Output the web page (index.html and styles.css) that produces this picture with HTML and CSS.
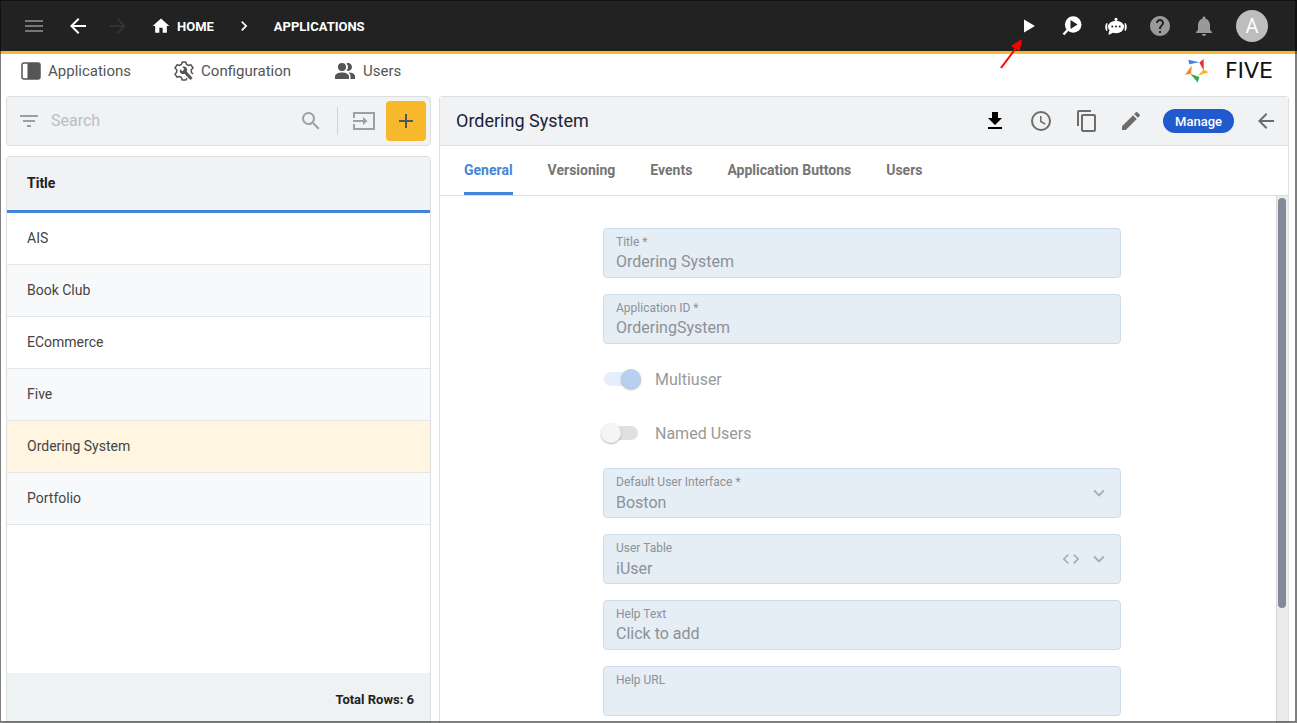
FILE: index.html
```html
<!DOCTYPE html>
<html lang="en">
<head>
<meta charset="utf-8">
<title>Five - Applications</title>
<link rel="stylesheet" href="styles.css">
</head>
<body>
<div class="app">
  <header class="topbar">
    <button class="icon-btn menu" aria-label="Menu"><svg width="24" height="24" viewBox="0 0 24 24"><path fill="currentColor" d="M3 6h18v2H3zm0 5h18v2H3zm0 5h18v2H3z"/></svg></button>
    <button class="icon-btn" aria-label="Back"><svg width="24" height="24" viewBox="0 0 24 24"><path fill="currentColor" d="M20 11H7.830l5.590-5.590L12 4l-8 8 8 8 1.410-1.410L7.830 13H20z"/></svg></button>
    <button class="icon-btn dim" aria-label="Forward"><svg width="24" height="24" viewBox="0 0 24 24"><path fill="currentColor" d="M12 4l-1.410 1.410L16.170 11H4v2h12.170l-5.580 5.590L12 20l8-8z"/></svg></button>
    <nav class="crumbs" aria-label="Breadcrumb">
      <a class="crumb" href="#"><svg width="20" height="20" viewBox="0 0 24 24"><path fill="currentColor" d="M10 20v-6h4v6h5v-8h3L12 3 2 12h3v8z"/></svg>HOME</a>
      <svg width="20" height="20" viewBox="0 0 24 24"><path fill="currentColor" d="M10 6L8.590 7.410 13.170 12l-4.580 4.590L10 18l6-6z"/></svg>
      <a class="crumb" href="#">APPLICATIONS</a>
    </nav>
    <div class="actions">
      <button class="icon-btn" aria-label="Run"><svg width="24" height="24" viewBox="0 0 24 24"><path fill="currentColor" d="M8 5.500v13L19 12z"/></svg></button>
      <button class="icon-btn" aria-label="Inspect"><svg width="24" height="24" viewBox="0 0 24 24"><circle cx="13.200" cy="10.500" r="8.300" fill="currentColor"/><path d="M8.500 15L3.500 20.500" stroke="currentColor" stroke-width="2.500"/><path fill="#222" d="M10.500 6v9l7-4.500z"/></svg></button>
      <button class="icon-btn" aria-label="Assistant"><svg width="24" height="24" viewBox="0 0 24 24"><g fill="currentColor"><circle cx="12" cy="5.200" r="1.500"/><path d="M11.300 6h1.400v3h-1.400zM5 16.500L4.500 21l5-2.500z"/><ellipse cx="12" cy="13" rx="8" ry="6.200"/><path d="M3.300 9v8H2.500C.8 15 .8 11 2.500 9zM20.700 9v8h.8c1.700-2 1.700-6 0-8z"/></g><g fill="#222"><circle cx="8.300" cy="12.500" r="1"/><circle cx="12" cy="12.500" r="1"/><circle cx="15.700" cy="12.500" r="1"/></g></svg></button>
      <button class="icon-btn muted" aria-label="Help"><svg width="24" height="24" viewBox="0 0 24 24"><path fill="currentColor" d="M12 2C6.480 2 2 6.480 2 12s4.480 10 10 10 10-4.480 10-10S17.520 2 12 2zm1 17h-2v-2h2zm2.070-7.750l-.9.920C13.450 12.900 13 13.500 13 15h-2v-.5c0-1.100.45-2.100 1.170-2.830l1.240-1.260c.37-.36.590-.86.590-1.410 0-1.100-.9-2-2-2s-2 .9-2 2H8c0-2.210 1.790-4 4-4s4 1.790 4 4c0 .88-.36 1.680-.93 2.250z"/></svg></button>
      <button class="icon-btn muted" aria-label="Notifications"><svg width="24" height="24" viewBox="0 0 24 24"><path fill="currentColor" d="M12 22c1.100 0 2-.9 2-2h-4c0 1.100.9 2 2 2zm6-6v-5c0-3.070-1.630-5.640-4.500-6.320V4c0-.83-.67-1.500-1.500-1.500s-1.500.67-1.500 1.500v.68C7.640 5.360 6 7.920 6 11v5l-2 2v1h16v-1z"/></svg></button>
      <button class="avatar">A</button>
    </div>
  </header>

  <div class="subbar">
    <nav class="sections" aria-label="Sections">
      <a class="section" href="#"><svg width="20" height="18" viewBox="0 0 20 18"><rect x="1" y="1" width="18" height="16" rx="2" fill="none" stroke="currentColor" stroke-width="1.500"/><path fill="currentColor" d="M6.500 1H18a1 1 0 0 1 1 1v14a1 1 0 0 1-1 1H6.500z"/></svg>Applications</a>
      <a class="section" href="#"><svg width="20" height="20" viewBox="0 0 20 20"><path fill="none" stroke="currentColor" stroke-width="1.500" stroke-linejoin="round" d="M13 17.200L12 19H8.200L7.500 16.700 5.400 15.500 3 16.200 1 13l1.700-1.700V8.700L1 7l2-3.200 2.400.7 2.100-1.200L8.200 1h3.600l.7 2.300 2.100 1.200 2.400-.7L19 7l-1.700 1.700v2.600L19 13"/><path d="M10 10l7.500 8" stroke="currentColor" stroke-width="3"/><path fill="currentColor" d="M6 8.300l2.300 2 2-2-2-2.500c3-1 5.700 1.500 4.600 4.500l-2.400 2.500C7.500 14 5 11.500 6 8.300z"/></svg>Configuration</a>
      <a class="section" href="#"><svg width="22" height="18" viewBox="0 0 22 18"><g fill="currentColor"><circle cx="8" cy="5" r="4"/><path d="M1 17v-2.500C1 12 4.500 10.500 8 10.500s7 1.500 7 4V17zM16.500 17v-3c0-1.400-.8-2.500-2-3.400 3.500 0 6.500 1.400 6.500 3.900V17zM12.500 8.600a5 5 0 0 0 0-7.200C15.500.2 18 2.400 18 5s-2.500 4.800-5.500 3.600z"/></g></svg>Users</a>
    </nav>
    <a class="logo" href="#"><svg width="24" height="24" viewBox="0 0 24 24"><path fill="#3f86e0" d="M3.300.7l11 2.600L4.300 5.300z"/><path fill="#e5333a" d="M18.700 0v11.700L14.300 3.500z"/><path fill="#f8b82b" d="M23.800 13.200l-11.100 3.500 5.800-6.200z"/><path fill="#34a853" d="M5.200 14.800l9.200 3.200-1.700 5.500z"/><path fill="#f58634" d="M0 15.800l6.800-9.200-.7 8.200z"/></svg>FIVE</a>
  </div>

  <main class="panels">
    <section class="list">
      <form class="search">
        <svg width="24" height="24" viewBox="0 0 24 24"><path fill="currentColor" d="M10 18h4v-2h-4zM3 6v2h18V6zm3 7h12v-2H6z"/></svg>
        <input class="search-input" type="text" placeholder="Search" aria-label="Search">
        <button type="button" class="icon-btn" aria-label="Find"><svg width="24" height="24" viewBox="0 0 24 24"><path fill="currentColor" d="M15.500 14h-.79l-.28-.27A6.470 6.470 0 0 0 16 9.500 6.500 6.500 0 1 0 9.500 16c1.610 0 3.090-.59 4.230-1.570l.27.28v.79l5 4.990L20.490 19zm-6 0C7.010 14 5 11.990 5 9.500S7.010 5 9.500 5 14 7.010 14 9.500 11.990 14 9.500 14z"/></svg></button>
        <span class="divider"></span>
        <button type="button" class="icon-btn" aria-label="Import"><svg width="24" height="24" viewBox="0 0 24 24"><path fill="none" stroke="currentColor" stroke-width="2" d="M2 9V4h20v16H2v-5"/><path fill="currentColor" d="M1 11h10V8l4.500 4-4.500 4v-3H1z"/></svg></button>
        <button type="button" class="add" aria-label="Add"><svg width="24" height="24" viewBox="0 0 24 24"><path fill="currentColor" d="M19 13h-6v6h-2v-6H5v-2h6V5h2v6h6z"/></svg></button>
      </form>
      <div class="grid">
        <table class="table">
          <thead><tr><th>Title</th></tr></thead>
          <tbody>
            <tr><td>AIS</td></tr>
            <tr><td>Book Club</td></tr>
            <tr><td>ECommerce</td></tr>
            <tr><td>Five</td></tr>
            <tr class="selected"><td>Ordering System</td></tr>
            <tr><td>Portfolio</td></tr>
          </tbody>
        </table>
        <div class="total">Total Rows: 6</div>
      </div>
    </section>

    <section class="detail">
      <div class="detail-head">
        <h1 class="detail-title">Ordering System</h1>
        <div class="tools">
          <button class="icon-btn strong" aria-label="Download"><svg width="24" height="24" viewBox="0 0 24 24"><path fill="currentColor" d="M19 9h-4V3H9v6H5l7 7zM5 18v2h14v-2z"/></svg></button>
          <button class="icon-btn" aria-label="History"><svg width="24" height="24" viewBox="0 0 24 24"><circle cx="12" cy="12" r="9" fill="none" stroke="currentColor" stroke-width="2"/><path fill="none" stroke="currentColor" stroke-width="1.500" d="M11.800 7v5.500l4.500 2.600"/></svg></button>
          <button class="icon-btn" aria-label="Copy"><svg width="24" height="24" viewBox="0 0 24 24"><path fill="currentColor" d="M16 1H4c-1.100 0-2 .9-2 2v14h2V3h12zm3 4H8c-1.100 0-2 .9-2 2v14c0 1.100.9 2 2 2h11c1.100 0 2-.9 2-2V7c0-1.100-.9-2-2-2zm0 16H8V7h11z"/></svg></button>
        </div>
        <button class="icon-btn" aria-label="Edit"><svg width="24" height="24" viewBox="0 0 24 24"><path fill="currentColor" d="M3 17.250V21h3.750L17.810 9.940l-3.750-3.750zM20.710 7.040a1 1 0 0 0 0-1.410l-2.340-2.340a1 1 0 0 0-1.410 0l-1.830 1.830 3.750 3.750z"/></svg></button>
        <button class="manage">Manage</button>
        <button class="icon-btn" aria-label="Close"><svg width="24" height="24" viewBox="0 0 24 24"><path fill="currentColor" d="M20 11H7.830l5.590-5.590L12 4l-8 8 8 8 1.410-1.410L7.830 13H20z"/></svg></button>
      </div>
      <div class="tabs" role="tablist">
        <button class="tab active" role="tab" aria-selected="true">General</button>
        <button class="tab" role="tab">Versioning</button>
        <button class="tab" role="tab">Events</button>
        <button class="tab" role="tab">Application Buttons</button>
        <button class="tab" role="tab">Users</button>
      </div>
      <div class="body">
        <form class="form">
          <div class="field"><label for="title">Title *</label><input id="title" type="text" value="Ordering System" disabled></div>
          <div class="field"><label for="appid">Application ID *</label><input id="appid" type="text" value="OrderingSystem" disabled></div>
          <label class="toggle"><input type="checkbox" checked disabled>Multiuser</label>
          <label class="toggle"><input type="checkbox" disabled>Named Users</label>
          <div class="field picker">
            <label for="ui">Default User Interface *</label><select id="ui" disabled><option>Boston</option></select>
            <span class="marks"><svg width="22" height="22" viewBox="0 0 24 24"><path fill="currentColor" d="M7.410 8.590L12 13.170l4.590-4.580L18 10l-6 6-6-6z"/></svg></span>
          </div>
          <div class="field picker">
            <label for="table">User Table</label><select id="table" disabled><option>iUser</option></select>
            <span class="marks"><svg width="20" height="20" viewBox="0 0 24 24"><path fill="currentColor" d="M9.400 16.600L4.800 12l4.600-4.600L8 6l-6 6 6 6zm5.200 0l4.600-4.600-4.600-4.600L16 6l6 6-6 6z"/></svg><svg width="22" height="22" viewBox="0 0 24 24"><path fill="currentColor" d="M7.410 8.590L12 13.170l4.590-4.580L18 10l-6 6-6-6z"/></svg></span>
          </div>
          <div class="field"><label for="help">Help Text</label><input id="help" type="text" value="Click to add" disabled></div>
          <div class="field"><label for="url">Help URL</label><input id="url" type="text" disabled></div>
        </form>
        <div class="scrollbar"><div class="thumb"></div></div>
      </div>
    </section>
  </main>
  <svg class="pointer" width="24" height="32" viewBox="0 0 24 32"><path d="M1 30L16 10" stroke="#f00" stroke-width="2"/><path fill="#f00" d="M22 1L19.500 13.500 11 8z"/></svg>
</div>
</body>
</html>
```
FILE: styles.css
```css
* { box-sizing: border-box; }
body { margin: 0; font-family: Roboto, "Liberation Sans", sans-serif; font-size: 14px; color: #444; background: #fff; }
button, input, select { font: inherit; color: inherit; border: 0; padding: 0; margin: 0; background: none; }
a { color: inherit; text-decoration: none; }
svg { display: block; flex: none; }

.app { position: relative; display: flex; flex-direction: column; height: 100vh; overflow: hidden; padding: 0 8px 0 6px; }
.app::after { content: ""; position: absolute; inset: 0; border: solid rgba(0, 0, 0, .5); border-width: 1px 2px 2px 1px; pointer-events: none; }
.icon-btn { display: flex; align-items: center; justify-content: center; flex: none; }

.topbar { display: flex; align-items: center; gap: 16px; flex: none; height: 54px; margin: 0 -8px 0 -6px; padding: 1px 29px 0 22px; color: #fff; background: #222; border-bottom: 3px solid #f8b82b; }
.menu { margin-right: 4px; color: #777; }
.dim { color: #333; }
.muted { color: #999; }
.crumbs { display: flex; align-items: center; gap: 20px; margin-left: 5px; font-size: 13px; font-weight: 700; }
.crumb { display: flex; align-items: center; gap: 6px; }
.actions { display: flex; align-items: center; margin-left: auto; }
.actions .icon-btn { width: 44px; height: 44px; }
.avatar { width: 32px; height: 32px; margin-left: 10px; border-radius: 50%; background: #bdbdbd; font-size: 20px; }

.subbar { display: flex; justify-content: space-between; flex: none; height: 42px; padding: 0 16px 9px 15px; }
.sections { display: flex; align-items: center; gap: 43px; font-size: 15px; color: #555; }
.section { display: flex; align-items: center; gap: 7px; }
.logo { display: flex; align-items: center; gap: 16px; font-family: "DejaVu Sans", sans-serif; font-size: 22px; line-height: 28px; color: #111; }

.panels { display: grid; grid-template-columns: 1fr 2fr; gap: 8px; flex: 1; min-height: 0; }
.list { display: flex; flex-direction: column; gap: 10px; min-height: 0; }
.search { display: flex; align-items: center; gap: 14px; height: 50px; padding: 0 4px 0 10px; border: 1px solid #dcdee0; border-radius: 4px; background: #f0f2f4; color: #98a0a8; }
.search-input { flex: 1; min-width: 0; margin-left: -4px; padding-bottom: 2px; font-size: 16px; }
.search-input::placeholder { color: #bbbec2; opacity: 1; }
.divider { width: 1px; height: 28px; background: #cfd2d6; }
.add { display: flex; align-items: center; justify-content: center; width: 40px; height: 40px; margin-left: -4px; border-radius: 4px; background: #f8b82b; color: #555; }
.grid { display: flex; flex-direction: column; flex: 1; min-height: 0; border: 1px solid #dcdee0; border-bottom: 0; border-radius: 4px 4px 0 0; }
.table { width: 100%; border-collapse: separate; border-spacing: 0; }
.table th { height: 56px; padding: 0 20px 2px; text-align: left; font-weight: 700; color: #222; background: #f0f2f4; border-bottom: 3px solid #4485d9; }
.table td { height: 52px; padding: 0 20px 2px; border-bottom: 1px solid #e4e6e8; }
.table tr:nth-child(even) td { background: #f8f9fb; }
.table .selected td { background: #fff5e1; }
.total { display: flex; align-items: center; justify-content: flex-end; height: 50px; margin-top: auto; padding: 2px 16px 0; font-size: 13px; font-weight: 700; color: #222; background: #eef2f3; }

.detail { display: flex; flex-direction: column; min-height: 0; border: 1px solid #dcdee0; border-bottom: 0; border-radius: 4px 4px 0 0; }
.detail-head { display: flex; align-items: center; gap: 20px; flex: none; height: 49px; padding: 0 10px 0 16px; background: #f0f2f4; border-bottom: 1px solid #dcdee0; color: #6c6c6c; }
.detail-title { flex: 1; margin: 0; padding-bottom: 2px; font-size: 18px; font-weight: 400; color: #1b2338; }
.tools { display: flex; gap: 22px; }
.strong { color: #000; }
.manage { height: 24px; padding: 0 12px; border-radius: 12px; background: #215acd; color: #fff; font-size: 13px; font-weight: 500; }
.tabs { display: flex; gap: 35px; flex: none; height: 50px; padding: 0 24px; border-bottom: 1px solid #dcdee0; }
.tab { padding-bottom: 2px; border: solid transparent; border-width: 3px 0; font-weight: 700; color: #757575; }
.tab.active { color: #4485d9; border-bottom-color: #4485d9; }
.body { display: flex; flex: 1; min-height: 0; }
.form { flex: 1; display: flex; flex-direction: column; align-items: center; gap: 16px; padding: 32px 0 0 8px; overflow: hidden; }
.field { display: grid; flex: none; grid-template: 16px 22px / 1fr auto; align-content: center; width: 100%; max-width: 518px; height: 50px; padding: 0 12px; border: 1px solid #cbdcec; border-radius: 4px; background: #e5edf5; color: #8d9198; }
.field label { font-size: 12px; line-height: 16px; }
.field input, .field select { grid-area: 2 / 1; width: 100%; height: 22px; font-size: 16px; appearance: none; opacity: 1; color: inherit; }
.field select { padding-top: 2px; }
.marks { display: flex; align-items: center; gap: 7px; grid-area: 1 / 2 / 3 / 3; margin-right: -2px; color: #a9aeb6; }
.toggle { display: flex; align-items: center; gap: 14px; flex: none; width: 100%; max-width: 518px; height: 38px; font-size: 16px; color: #999; }
.toggle input { display: flex; align-items: center; width: 34px; height: 14px; margin: 0 3px 0 1px; border-radius: 7px; background: #e0e0e0; appearance: none; }
.toggle input::before { content: ""; flex: none; width: 20px; height: 20px; margin-left: -3px; border-radius: 50%; background: #f5f5f5; box-shadow: 0 1px 2px rgba(0, 0, 0, .3); }
.toggle input:checked { background: #e5eefa; justify-content: flex-end; }
.toggle input:checked::before { margin-right: -3px; background: #b7d0f0; }
.scrollbar { width: 12px; padding: 2px 2px 0 1px; border-left: 1px solid #d5d5d5; background: #ebebeb; }
.thumb { height: 78%; border-radius: 4px; background: #838998; }
.pointer { position: absolute; right: 273px; top: 38px; }
```
